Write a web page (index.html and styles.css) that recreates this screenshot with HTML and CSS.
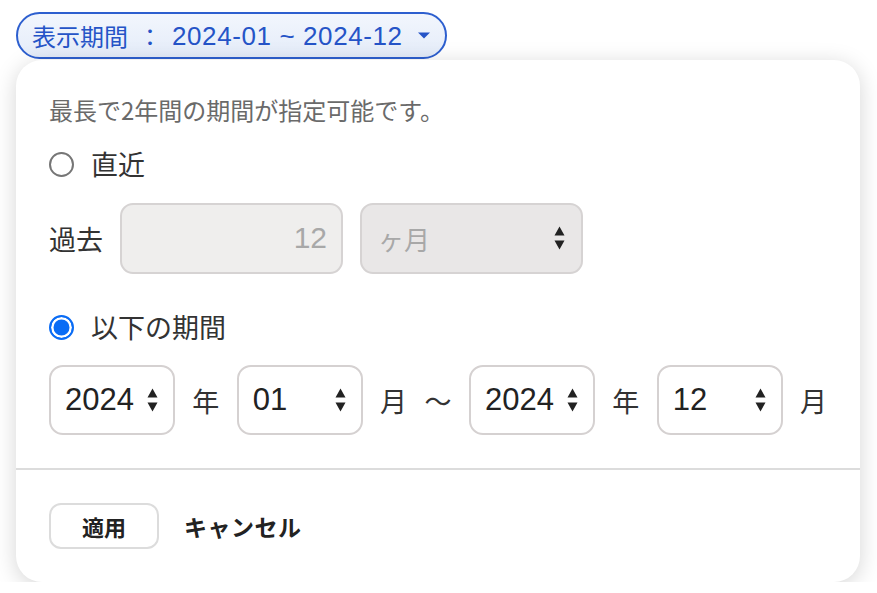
FILE: index.html
```html
<!DOCTYPE html>
<html lang="ja">
<head>
<meta charset="utf-8">
<title>表示期間</title>
<link rel="stylesheet" href="styles.css">
</head>
<body>
<div class="page">
  <button class="pill" type="button">
    <span class="pill-label">表示期間</span>
    <span class="pill-colon">：</span>
    <span class="pill-value">2024-01 ~ 2024-12</span>
    <svg class="pill-caret" width="12" height="7" viewBox="0 0 12 7"><path d="M0 0.5h12L6 6.5z" fill="#2554c7"/></svg>
  </button>

  <div class="card">
    <div class="card-body">
      <p class="note">最長で2年間の期間が指定可能です。</p>

      <label class="radio-row">
        <span class="radio"></span>
        <span class="radio-text">直近</span>
      </label>

      <div class="past-row">
        <span class="past-label">過去</span>
        <div class="field field-input"><span class="num">12</span></div>
        <div class="field field-select">
          <span>ヶ月</span>
          <svg class="updown" width="11" height="24" viewBox="0 0 11 24"><path d="M5.5 0.5L10.5 9.5H0.5z M5.5 23.5L10.5 14.5H0.5z" fill="#222"/></svg>
        </div>
      </div>

      <label class="radio-row radio-row-2">
        <span class="radio radio-on"></span>
        <span class="radio-text">以下の期間</span>
      </label>

      <div class="date-row">
        <div class="dbox"><span class="num">2024</span><svg class="updown" width="11" height="24" viewBox="0 0 11 24"><path d="M5.5 0.5L10.5 9.5H0.5z M5.5 23.5L10.5 14.5H0.5z" fill="#222"/></svg></div>
        <span class="unit">年</span>
        <div class="dbox"><span class="num">01</span><svg class="updown" width="11" height="24" viewBox="0 0 11 24"><path d="M5.5 0.5L10.5 9.5H0.5z M5.5 23.5L10.5 14.5H0.5z" fill="#222"/></svg></div>
        <span class="unit">月</span>
        <span class="unit">〜</span>
        <div class="dbox"><span class="num">2024</span><svg class="updown" width="11" height="24" viewBox="0 0 11 24"><path d="M5.5 0.5L10.5 9.5H0.5z M5.5 23.5L10.5 14.5H0.5z" fill="#222"/></svg></div>
        <span class="unit">年</span>
        <div class="dbox"><span class="num">12</span><svg class="updown" width="11" height="24" viewBox="0 0 11 24"><path d="M5.5 0.5L10.5 9.5H0.5z M5.5 23.5L10.5 14.5H0.5z" fill="#222"/></svg></div>
        <span class="unit">月</span>
      </div>
    </div>

    <div class="card-footer">
      <button class="btn-apply" type="button">適用</button>
      <button class="btn-cancel" type="button">キャンセル</button>
    </div>
  </div>
</div>
</body>
</html>
```

FILE: styles.css
```css
* { box-sizing: border-box; }

html, body {
  margin: 0;
  padding: 0;
  background: #ffffff;
}

body {
  font-family: "Noto Sans CJK JP", "Liberation Sans", sans-serif;
  color: #333333;
}

.page {
  display: flex;
  flex-direction: column;
  align-items: flex-start;
  padding: 12px 0 0 16px;
}

.pill {
  display: flex;
  align-items: center;
  height: 47px;
  width: 431px;
  padding: 0 0 0 14px;
  border: 2px solid #2d5fcf;
  border-radius: 24px;
  background: linear-gradient(#f2f6fd, #e4ecf9);
  color: #2554c7;
  font-family: "Noto Sans CJK JP", sans-serif;
  font-size: 24px;
  line-height: 1;
  cursor: pointer;
}

.pill-label { display: block; }

.pill-colon {
  display: block;
  margin-left: 10px;
  font-size: 24px;
}

.pill-value {
  display: block;
  margin-left: 10px;
  font-family: "Liberation Sans", sans-serif;
  font-size: 26px;
  letter-spacing: 0.6px;
}

.pill-caret {
  display: block;
  margin-left: 15px;
}

.card {
  margin-top: 1px;
  width: 844px;
  height: 522px;
  background: #ffffff;
  border-radius: 26px;
  box-shadow: 0 4px 22px rgba(0, 0, 0, 0.17);
  display: flex;
  flex-direction: column;
}

.card-body {
  padding: 35px 33px 33px 33px;
  border-bottom: 2px solid #dcdcdc;
  display: flex;
  flex-direction: column;
}

.note {
  margin: 0;
  height: 30px;
  line-height: 30px;
  font-size: 24px;
  color: #6a6a6a;
}

.radio-row {
  display: flex;
  align-items: center;
  height: 30px;
  margin-top: 24px;
}

.radio-row-2 { margin-top: 39px; }

.radio {
  width: 25px;
  height: 25px;
  border-radius: 50%;
  border: 2px solid #767676;
  background: #ffffff;
  flex: none;
}

.radio-on {
  border: 2px solid #0a6cf5;
  background: #0a6cf5;
  box-shadow: inset 0 0 0 2.5px #ffffff;
}

.radio-text {
  margin-left: 17px;
  font-size: 27px;
  line-height: 30px;
  color: #333333;
}

.past-row {
  display: flex;
  align-items: center;
  margin-top: 24px;
  height: 70px;
  gap: 17px;
}

.past-label {
  font-size: 27px;
  color: #333333;
  width: 54px;
}

.field {
  width: 223px;
  height: 71px;
  border: 2px solid #d6d3d3;
  border-radius: 13px;
  display: flex;
  align-items: center;
}

.field-input {
  background: #efeeed;
  justify-content: flex-end;
  padding-right: 14px;
}

.field-input .num {
  font-family: "Liberation Sans", sans-serif;
  font-size: 30px;
  color: #a8a8a8;
}

.field-select {
  background: #e9e7e7;
  justify-content: space-between;
  padding: 0 16px 0 16px;
  font-size: 26px;
  color: #a8a8a8;
}

.date-row {
  display: flex;
  align-items: center;
  margin-top: 23px;
  height: 70px;
  gap: 17.5px;
}

.dbox {
  width: 126px;
  height: 70px;
  border: 2px solid #d5d1d1;
  border-radius: 14px;
  background: #ffffff;
  display: flex;
  align-items: center;
  justify-content: space-between;
  padding: 0 15px 0 14px;
}

.dbox .num {
  font-family: "Liberation Sans", sans-serif;
  font-size: 31px;
  color: #222222;
}

.updown { display: block; flex: none; }

.unit {
  font-size: 27px;
  width: 27px;
  text-align: center;
  color: #333333;
}

.card-footer {
  flex: 1;
  display: flex;
  align-items: center;
  padding: 0 33px;
  gap: 25px;
}

.btn-apply {
  width: 110px;
  height: 46px;
  border: 2px solid #dcdcdc;
  border-radius: 12px;
  background: #ffffff;
  font-family: "Noto Sans CJK JP", sans-serif;
  font-weight: 700;
  font-size: 22px;
  color: #222222;
  padding: 0;
  cursor: pointer;
}

.btn-cancel {
  border: none;
  background: none;
  padding: 0;
  font-family: "Noto Sans CJK JP", sans-serif;
  font-weight: 700;
  font-size: 23px;
  letter-spacing: 0.5px;
  color: #222222;
  cursor: pointer;
}
```
